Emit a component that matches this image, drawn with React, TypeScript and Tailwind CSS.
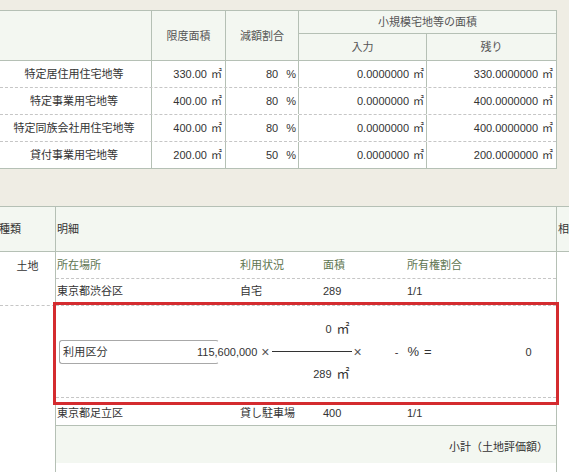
import React from "react";

const LIMITS = [
  { name: "特定居住用住宅地等", limit: "330.00", rate: "80", input: "0.0000000", rest: "330.0000000" },
  { name: "特定事業用宅地等", limit: "400.00", rate: "80", input: "0.0000000", rest: "400.0000000" },
  { name: "特定同族会社用住宅地等", limit: "400.00", rate: "80", input: "0.0000000", rest: "400.0000000" },
  { name: "貸付事業用宅地等", limit: "200.00", rate: "50", input: "0.0000000", rest: "200.0000000" },
];

function Sqm({ className = "" }: { className?: string }) {
  return <span className={`ml-[4px] ${className}`}>㎡</span>;
}

function LimitTable() {
  return (
    <div className="w-[557px] border-t border-r border-[#b5c0b5] bg-white">
      <div className="grid grid-cols-[152px_74px_73px_128px_129px] grid-rows-[23px_26px] border-b border-[#b5c0b5] bg-[#f3f7f1] text-[#555]">
        <div className="row-span-2 border-r border-[#b5c0b5]" />
        <div className="row-span-2 flex items-center justify-center border-r border-[#b5c0b5]">限度面積</div>
        <div className="row-span-2 flex items-center justify-center border-r border-[#b5c0b5]">減額割合</div>
        <div className="col-span-2 flex items-center justify-center border-b border-[#b5c0b5]">小規模宅地等の面積</div>
        <div className="flex items-center justify-center border-r border-[#b5c0b5]">入力</div>
        <div className="flex items-center justify-center">残り</div>
      </div>
      {LIMITS.map((r, i) => (
        <div
          key={r.name}
          className={`grid h-[27px] grid-cols-[152px_74px_73px_128px_129px] border-b ${
            i === LIMITS.length - 1 ? "border-solid border-[#b5c0b5]" : "border-dashed border-[#c6c6c6]"
          }`}
        >
          <div className="flex items-center justify-center border-r border-[#b5c0b5] pr-[3px]">{r.name}</div>
          <div className="flex items-center justify-end border-r border-[#b5c0b5] pr-[3px]">
            {r.limit}
            <Sqm />
          </div>
          <div className="flex items-center justify-end border-r border-[#b5c0b5] pr-[2px]">
            {r.rate}
            <span className="ml-[8px]">%</span>
          </div>
          <div className="flex items-center justify-end border-r border-[#b5c0b5] pr-[2px]">
            {r.input}
            <Sqm />
          </div>
          <div className="flex items-center justify-end pr-[3px]">
            {r.rest}
            <Sqm />
          </div>
        </div>
      ))}
    </div>
  );
}

function DetailTable() {
  return (
    <div className="mt-[37px] border-t border-[#b5c0b5] bg-white">
      <div className="flex h-[45px] border-b border-[#b5c0b5] bg-[#f3f7f1] text-[#333]">
        <div className="flex w-[56px] items-center border-r border-[#b5c0b5]">
          <span className="ml-[-1px]">種類</span>
        </div>
        <div className="flex w-[501px] items-center border-r border-[#b5c0b5] pl-[1px]">明細</div>
        <div className="flex items-center pl-[1px]">相</div>
      </div>

      <div className="flex h-[240px]">
        <div className="w-[56px] border-r border-[#b5c0b5]">
          <div className="flex h-[54px] justify-center border-b border-dashed border-[#c6c6c6] pt-[7px]">土地</div>
        </div>

        <div className="flex w-[501px] flex-col border-r border-[#b5c0b5]">
          <div className="grid h-[27px] grid-cols-[183px_83px_84px_1fr] items-center border-b border-dashed border-[#c6c6c6] pl-[1px] text-[#5e7550]">
            <span>所在場所</span>
            <span>利用状況</span>
            <span>面積</span>
            <span>所有権割合</span>
          </div>
          <div className="grid h-[27px] grid-cols-[183px_83px_84px_1fr] items-center border-b border-dashed border-[#c6c6c6] pb-[2px] pl-[1px]">
            <span>東京都渋谷区</span>
            <span>自宅</span>
            <span>289</span>
            <span>1/1</span>
          </div>

          <div className="relative flex h-[92px] items-center border-b border-dashed border-[#c6c6c6] pl-[3px]">
            <div className="flex h-[24px] w-[160px] items-center rounded-[3px] border border-[#a8a8a8] border-r-transparent bg-white pl-[3px] tracking-[0.2px]">
              利用区分
            </div>
            <span className="ml-[-22px]">115,600,000</span>
            <span className="ml-[4px] text-[14px] leading-[14px] text-[#555]">×</span>
            <div className="ml-[2px] flex w-[80px] flex-col">
              <div className="flex h-[44px] items-center justify-end pr-[2px]">
                <span>0</span>
                <span className="ml-[5px] text-[13px]">㎡</span>
              </div>
              <div className="h-px bg-[#333]" />
              <div className="flex h-[44px] items-center justify-end pr-[2px]">
                <span>289</span>
                <span className="ml-[5px] text-[13px]">㎡</span>
              </div>
            </div>
            <span className="ml-[2px] text-[14px] leading-[14px] text-[#555]">×</span>
            <span className="ml-[33px]">-</span>
            <span className="ml-[9px] text-[13px]">%</span>
            <span className="ml-[5px] text-[13px]">=</span>
            <span className="ml-[94px]">0</span>
            <div className="pointer-events-none absolute -top-[4px] -bottom-[8px] -left-[3px] -right-[3px] border-[3px] border-[#d42b2f]" />
          </div>

          <div className="grid h-[28px] grid-cols-[183px_83px_84px_1fr] items-center border-b border-[#b5c0b5] pt-[2px] pl-[1px]">
            <span>東京都足立区</span>
            <span>貸し駐車場</span>
            <span>400</span>
            <span>1/1</span>
          </div>
          <div className="flex h-[37px] items-center justify-end bg-[#f3f7f1] pt-[5px] pr-[8px]">小計（土地評価額）</div>
        </div>

        <div className="flex-1" />
      </div>
    </div>
  );
}

export default function App() {
  return (
    <div className="h-[472px] w-[569px] overflow-hidden bg-[#efede4] pt-[10px] font-['Liberation_Sans','Noto_Sans_CJK_JP',sans-serif] text-[11px] leading-[14px] text-[#333]">
      <LimitTable />
      <DetailTable />
    </div>
  );
}
